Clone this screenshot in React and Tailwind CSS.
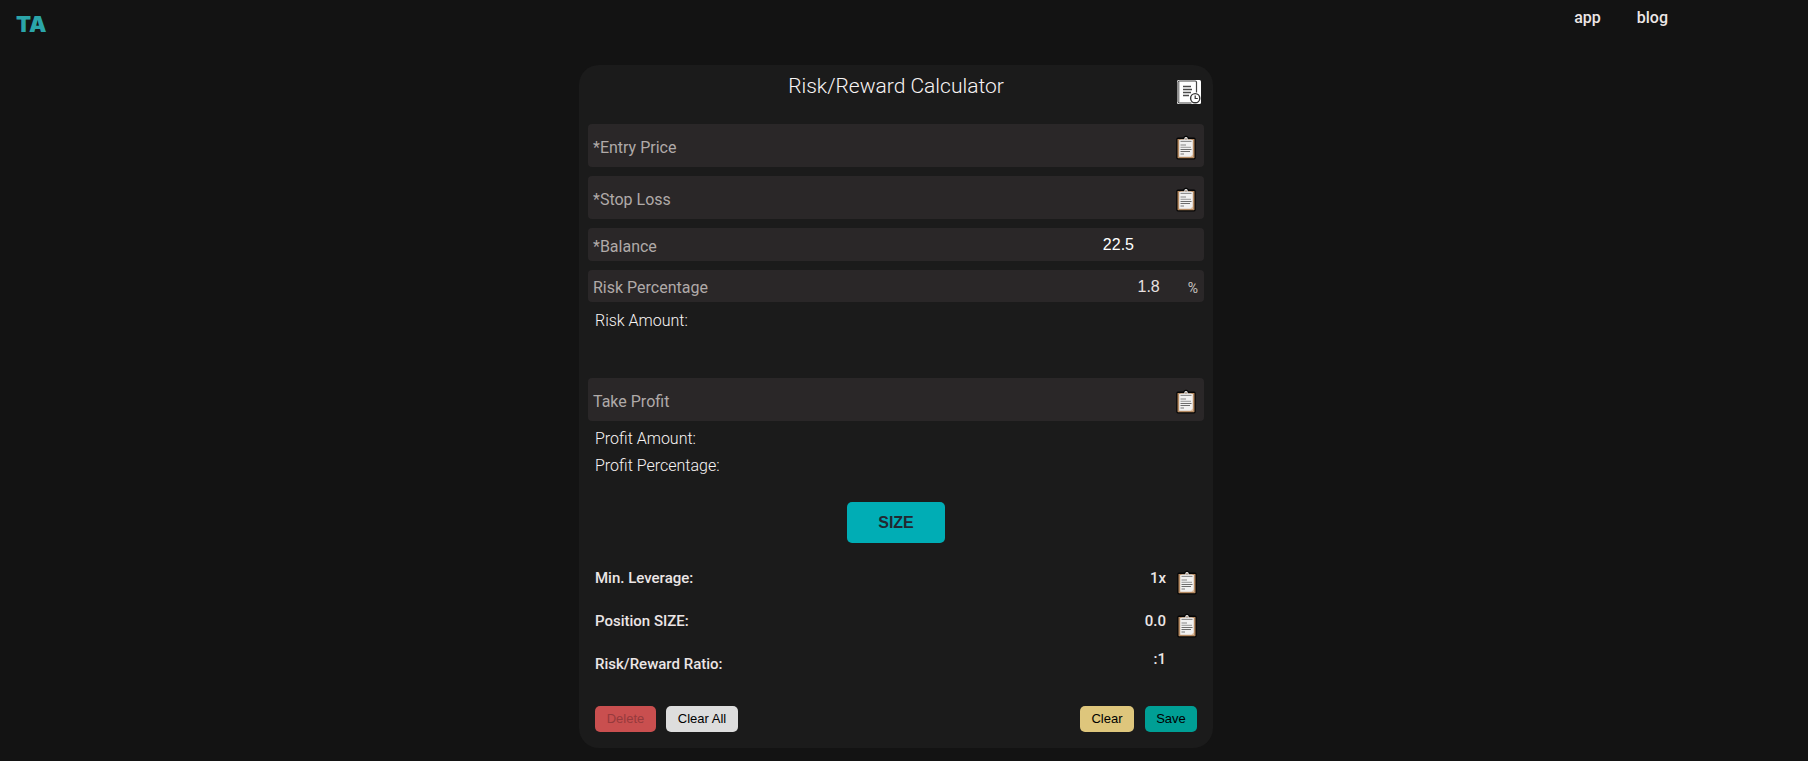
import React from "react";

function ClipboardIcon() {
  return (
    <svg width="20" height="26" viewBox="0 0 20 26" aria-hidden="true">
      <path
        d="M2 2.500h5.200C8 1.400 9 .8 10 .8s2 .6 2.800 1.700H18a1.700 1.700 0 0 1 1.700 1.700v18.600a1.700 1.700 0 0 1-1.700 1.700H2a1.700 1.700 0 0 1-1.700-1.700V4.200A1.700 1.700 0 0 1 2 2.500z"
        fill="#050505"
      />
      <rect x="1.500" y="4" width="17" height="19.200" rx="0.600" fill="#b58a62" />
      <rect x="3.200" y="5" width="13.600" height="16.800" fill="#f1f1f1" />
      <path d="M14.500 21.800l2.300-2.300v2.300z" fill="#d9b48f" />
      <path d="M4.500 5.500V4.400h3.300L9 2h2l1.200 2.400h3.300v1.100z" fill="#cfcfcf" />
      <circle cx="10" cy="4" r="0.800" fill="#b08c70" />
      <path d="M4.500 6.500h11" stroke="#8f8f8f" />
      <path d="M4.500 10h5.500M4.500 12.300h10.500" stroke="#a9a9a9" strokeWidth="1.300" />
      <path d="M4.500 14.500h11M4.500 16.500h9.500" stroke="#6d6d6d" />
      <path d="M4.500 19h3.500" stroke="#a0a0a0" strokeWidth="1.500" />
    </svg>
  );
}

function HistoryIcon() {
  return (
    <svg width="24" height="24" viewBox="0 0 24 24" fill="none" aria-hidden="true">
      <rect width="24" height="24" rx="1.500" fill="#fff" />
      <path
        d="M19.500 12.500V2.200c0-.8-.4-1.200-1.200-1.200H2.500C1.500 1 1 1.500 1 2.500v19c0 1 .5 1.500 1.500 1.500h12"
        stroke="#444"
        strokeWidth="1.200"
      />
      <path d="M2.500 2v20" stroke="#ccc" />
      <path d="M6 6.500h8M6 9.500h9M6 12.500h8M6 15.500h6" stroke="#4a4a4a" strokeWidth="1.300" />
      <circle cx="18.200" cy="18.200" r="4.600" fill="#fff" stroke="#333" strokeWidth="1.400" />
      <path d="M18.200 15.500v3h2.600" stroke="#333" strokeWidth="1.200" />
    </svg>
  );
}

function CopyButton({ label }) {
  return (
    <button type="button" aria-label={label} className="shrink-0">
      <ClipboardIcon />
    </button>
  );
}

function PriceField({ id, label }) {
  return (
    <div className="flex h-[43px] items-center rounded bg-[#2a2728] pl-[5px] pr-2 pt-1">
      <label htmlFor={id} className="text-[#b0aaa8]">
        {label}
      </label>
      <input
        id={id}
        type="text"
        inputMode="decimal"
        className="min-w-0 flex-1 bg-transparent px-3 text-right font-['Liberation_Sans',sans-serif] text-white outline-none"
      />
      <CopyButton label={"Paste " + label} />
    </div>
  );
}

function ResultLabel({ children }) {
  return <span className="flex-1">{children}</span>;
}

const resultRow = "flex items-start text-[15px] font-medium leading-6";
const smallButton =
  "h-[26px] rounded-[5px] font-['Liberation_Sans',sans-serif] text-[13px] leading-4";

export default function App() {
  return (
    <div className="min-h-screen bg-[#131313] pb-3 font-[Roboto,sans-serif] text-base leading-6 text-[#ece6e6]">
      <header className="flex h-[65px] items-start justify-between pl-4 pr-[140px]">
        <a
          href="#home"
          className="pt-3 font-[Inter,sans-serif] text-[22px] font-black leading-6 text-[#2ba5a9]"
        >
          TA
        </a>
        <nav className="flex gap-9 pt-1.5 font-medium">
          <a href="#app">app</a>
          <a href="#blog">blog</a>
        </nav>
      </header>

      <main className="flex justify-center pr-4">
        <form
          className="w-full max-w-[634px] rounded-[20px] bg-[#1b1b1b] px-[9px] pb-4"
          onSubmit={(e) => e.preventDefault()}
        >
          <div className="grid h-[59px] grid-cols-[1fr_auto_1fr] items-start">
            <h1 className="col-start-2 pt-[9px] text-[21px] font-light leading-6 text-[#f8f4f4]">
              Risk/Reward Calculator
            </h1>
            <button
              type="button"
              aria-label="History"
              className="mr-[3px] mt-[15px] justify-self-end"
            >
              <HistoryIcon />
            </button>
          </div>

          <div className="flex flex-col gap-[9px]">
            <PriceField id="entry" label="*Entry Price" />
            <PriceField id="stop" label="*Stop Loss" />
            <div className="flex h-[33px] items-center rounded bg-[#2a2728] pl-[5px] pr-[70px]">
              <label htmlFor="balance" className="pt-1 text-[#b0aaa8]">
                *Balance
              </label>
              <input
                id="balance"
                type="text"
                defaultValue="22.5"
                className="min-w-0 flex-1 bg-transparent text-right font-['Liberation_Sans',sans-serif] text-white outline-none"
              />
            </div>
            <div className="flex h-8 items-center rounded bg-[#2a2728] pl-[5px] pr-1.5">
              <label htmlFor="risk" className="pt-1 text-[#b0aaa8]">
                Risk Percentage
              </label>
              <input
                id="risk"
                type="text"
                defaultValue="1.8"
                className="min-w-0 flex-1 bg-transparent pr-7 pt-px text-right font-['Liberation_Sans',sans-serif] text-[#e6e0e0] outline-none"
              />
              <span className="pt-1 text-sm text-[#c8c3c1]">%</span>
            </div>
          </div>

          <p className="h-[76px] px-[7px] pt-[7px] font-light text-[#f8f4f4]">
            Risk Amount:
          </p>

          <PriceField id="profit" label="Take Profit" />

          <div className="flex flex-col gap-[3px] px-[7px] pt-1.5 font-light text-[#f8f4f4]">
            <p>Profit Amount:</p>
            <p>Profit Percentage:</p>
          </div>

          <div className="flex justify-center pt-6">
            <button
              type="submit"
              className="h-[41px] w-[98px] rounded-[5px] bg-[#00adb5] font-['Liberation_Sans',sans-serif] font-bold text-[#222831]"
            >
              SIZE
            </button>
          </div>

          <div className="px-[7px] pt-[23px]">
            <div className={resultRow + " h-[43px]"}>
              <ResultLabel>Min. Leverage:</ResultLabel>
              <span>1x</span>
              <span className="flex w-[31px] justify-end pt-1">
                <CopyButton label="Copy leverage" />
              </span>
            </div>
            <div className={resultRow + " h-[38px]"}>
              <ResultLabel>Position SIZE:</ResultLabel>
              <span>0.0</span>
              <span className="flex w-[31px] justify-end pt-1">
                <CopyButton label="Copy position size" />
              </span>
            </div>
            <div className={resultRow + " h-12 pr-[31px]"}>
              <span className="flex-1 pt-[5px]">Risk/Reward Ratio:</span>
              <span>:1</span>
            </div>
          </div>

          <div className="flex items-center px-[7px] pt-[11px]">
            <button
              type="button"
              disabled
              className={smallButton + " w-[61px] bg-[#c94f4f] text-[#963a3c]"}
            >
              Delete
            </button>
            <button
              type="button"
              className={smallButton + " ml-[10px] w-[72px] bg-[#dddddd] text-black"}
            >
              Clear All
            </button>
            <button
              type="button"
              className={smallButton + " ml-auto w-[54px] bg-[#dec67c] text-black"}
            >
              Clear
            </button>
            <button
              type="button"
              className={smallButton + " ml-[11px] w-[52px] bg-[#009f95] text-black"}
            >
              Save
            </button>
          </div>
        </form>
      </main>
    </div>
  );
}
